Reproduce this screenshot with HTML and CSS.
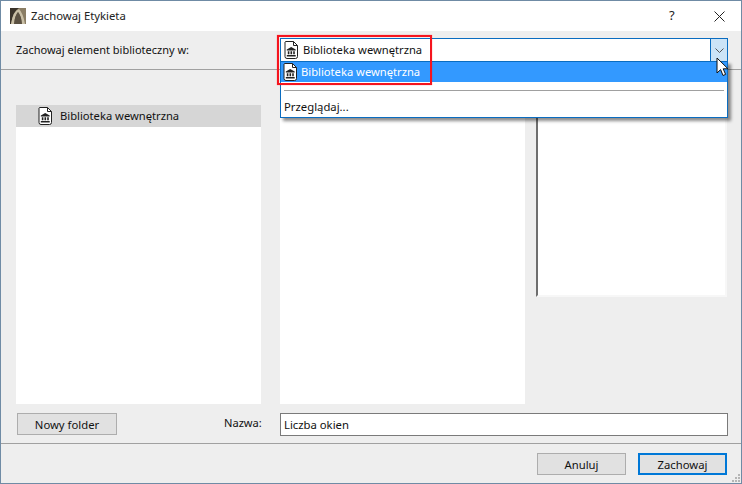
FILE: index.html
```html
<!DOCTYPE html>
<html lang="pl">
<head>
<meta charset="utf-8">
<title>Zachowaj Etykieta</title>
<link rel="stylesheet" href="styles.css">
</head>
<body>
<svg class="defs" width="0" height="0" aria-hidden="true">
  <symbol id="lib" viewBox="0 0 15 18">
    <path d="M1.5 .5H9.5L13.5 4.5V15.5Q13.5 17.5 11.5 17.5H3Q1 17.5 1 15.5V1Z" fill="#fff" stroke="#222" stroke-width="1"/>
    <path d="M9.5 .5V4.5H13.5" fill="none" stroke="#222" stroke-width="1"/>
    <path d="M2.8 8.6L7.2 6L11.7 8.6V9.6H2.8Z" fill="#222"/>
    <path d="M3.8 10.3h1.6v3H3.8zM6.5 10.3h1.6v3H6.5zM9.2 10.3h1.6v3H9.2zM2.8 14h8.9v1.4H2.8z" fill="#222"/>
  </symbol>
</svg>
<div class="window">
  <header class="titlebar">
    <svg class="appicon" width="16" height="16" viewBox="0 0 16 16" aria-hidden="true">
      <rect width="16" height="16" fill="#8a7d64"/>
      <path d="M0 0H9Q3 3 1 16H0Z" fill="#3a332a"/>
      <path d="M1 16Q3 3 9 1Q13 5 15 16H12Q11 7 8 4Q5 7 4 16Z" fill="#c9bfa6"/>
      <path d="M4 16Q5 7 8 4Q11 7 12 16Z" fill="#5b5142"/>
    </svg>
    <span class="title">Zachowaj Etykieta</span>
    <span class="help">?</span>
    <svg class="close" width="11" height="11" viewBox="0 0 11 11" aria-hidden="true"><path d="M.5 .5L10.5 10.5M10.5 .5L.5 10.5" stroke="#222" fill="none"/></svg>
  </header>
  <section class="locationbar">
    <label class="label location-label">Zachowaj element biblioteczny w:</label>
    <div class="combo">
      <svg class="doc" width="15" height="18" aria-hidden="true"><use href="#lib"/></svg>
      <span class="combo-text lib-name">Biblioteka wewnętrzna</span>
      <span class="combo-btn">
        <svg width="9" height="5" viewBox="0 0 9 5" aria-hidden="true"><path d="M.5 .5L4.5 4.5L8.5 .5" stroke="#555" fill="none"/></svg>
      </span>
    </div>
  </section>
  <main class="panes">
    <div class="pane">
      <div class="row-selected">
        <svg class="doc" width="15" height="18" aria-hidden="true"><use href="#lib"/></svg>
        <span class="lib-name">Biblioteka wewnętrzna</span>
      </div>
    </div>
    <div class="pane"></div>
    <div class="side"><div class="preview"></div></div>
  </main>
  <section class="namebar">
    <button class="btn new-folder">Nowy folder</button>
    <label class="label name-label">Nazwa:</label>
    <div class="name-input">Liczba okien</div>
  </section>
  <footer class="footer">
    <button class="btn">Anuluj</button>
    <button class="btn btn-default">Zachowaj</button>
    <svg class="grip" width="10" height="10" viewBox="0 0 10 10" aria-hidden="true"><path d="M7 1h2v2H7zM4 4h2v2H4zM7 4h2v2H7zM1 7h2v2H1zM4 7h2v2H4zM7 7h2v2H7z" fill="#b5b5b5"/></svg>
  </footer>

  <div class="popup">
    <div class="popup-item">
      <svg class="doc" width="15" height="18" aria-hidden="true"><use href="#lib"/></svg>
      <span class="lib-name">Biblioteka wewnętrzna</span>
    </div>
    <div class="popup-sep"></div>
    <div class="popup-browse">Przeglądaj...</div>
  </div>
  <div class="callout"></div>
  <svg class="cursor" width="13" height="20" viewBox="0 0 13 20" aria-hidden="true"><path d="M1 1V16L4.6 12.6L7 18.5L9.6 17.4L7.2 11.8H12Z" fill="#fff" stroke="#111" stroke-width="1"/></svg>
</div>
</body>
</html>
```
FILE: styles.css
```css
* { box-sizing: border-box; }
html, body { margin: 0; padding: 0; }
body { width: 742px; height: 484px; overflow: hidden; font-family: "Noto Sans", sans-serif; font-size: 11.3px; color: #111; }
.defs { position: absolute; }
.window { position: relative; width: 742px; height: 484px; border: 1px solid #6f8ba5; background: #eeeeee; display: flex; flex-direction: column; }
.titlebar { height: 30px; background: #fff; display: flex; align-items: center; padding: 0 0 0 9px; flex: none; }
.appicon { flex: none; }
.title { margin-left: 5px; margin-bottom: 2px; font-size: 11.3px; color: #222; flex: 1; }
.help { font-size: 13px; width: 11px; margin-right: 34px; margin-bottom: 2px; color: #222; }
.close { margin-right: 16px; }
.locationbar { height: 39px; flex: none; display: flex; align-items: center; padding: 0 13px 0 15px; border-bottom: 1px solid #a0a0a0; }
.location-label { width: 264px; font-size: 11px; margin-bottom: 2px; }
.lib-name { font-size: 11.2px; margin-bottom: 2px; }
.combo { width: 448px; height: 24px; background: #fff; border: 1px solid #0a6cc0; display: flex; align-items: center; padding-left: 3px; }
.doc { flex: none; display: block; }
.combo-text { margin-left: 4px; flex: 1; }
.combo-btn { width: 17px; height: 22px; background: #cce4f7; border-left: 1px solid #0a6cc0; display: flex; align-items: center; justify-content: center; }
.panes { flex: 1; display: flex; padding: 35px 0 0 15px; min-height: 0; }
.pane { width: 245px; flex: none; background: #fff; margin-right: 19px; }
.pane + .pane { margin-right: 11px; }
.row-selected { height: 22px; background: #d6d6d6; display: flex; align-items: center; padding-left: 22px; gap: 7px; }
.side { width: 191px; flex: none; height: 192px; }
.preview { height: 100%; background: #fff; border: 2px solid #f7f7f7; border-left: 2px solid #6e6e6e; border-top-color: #6e6e6e; }
.namebar { height: 39px; flex: none; display: flex; align-items: flex-start; padding: 9px 13px 0 16px; }
.btn { width: 89px; height: 22px; background: #e1e1e1; border: 1px solid #adadad; font: inherit; color: #111; padding: 0; }
.new-folder { width: 100px; }
.name-label { margin-left: 107px; width: 56px; line-height: 20px; font-size: 11.1px; }
.name-input { width: 448px; height: 23px; background: #fff; border: 1px solid #7a7a7a; line-height: 22px; padding-left: 3px; }
.footer { position: relative; flex: none; height: 40px; border-top: 1px solid #a0a0a0; display: flex; justify-content: flex-end; gap: 12px; padding: 9px 14px 0 0; }
.btn-default { border: 2px solid #0078d7; }
.grip { position: absolute; right: 0; bottom: 0; }
.popup { position: absolute; left: 279px; top: 60px; width: 448px; height: 57px; background: #fff; border: 1px solid #0a6cc0; box-shadow: 3px 3px 3px rgba(0,0,0,.45); }
.popup-item { height: 20px; background: #3399ff; color: #fff; display: flex; align-items: center; padding-left: 2px; gap: 3px; }
.popup-sep { height: 1px; background: #a0a0a0; margin: 8px 3px 0 3px; }
.popup-browse { margin-top: 9px; padding-left: 3px; line-height: 14px; }
.callout { position: absolute; left: 276px; top: 34px; width: 155px; height: 50px; border: 2px solid #f5141e; box-shadow: 0 0 1px rgba(255,0,0,.5); }
.cursor { position: absolute; left: 715px; top: 56px; }
```
